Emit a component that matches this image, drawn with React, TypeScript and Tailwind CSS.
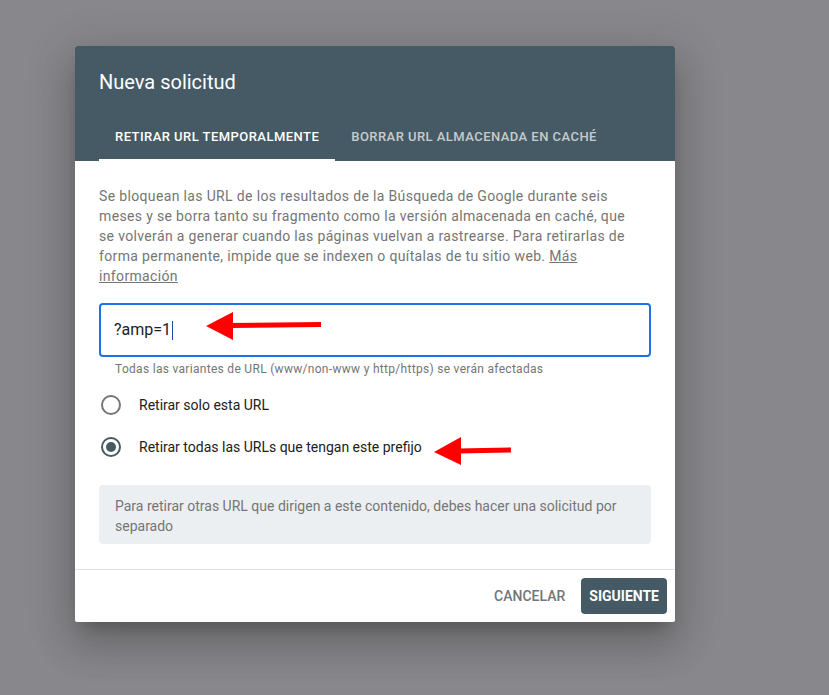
import React from 'react'

const font = { fontFamily: 'Roboto, "Liberation Sans", sans-serif' }

function Radio({ checked, label }: { checked?: boolean; label: string }) {
  return (
    <label className="flex h-[42px] items-center">
      <span
        className={
          'ml-[2px] flex h-[20px] w-[20px] items-center justify-center rounded-full border-2 ' +
          (checked ? 'border-[#455a64]' : 'border-[#757575]')
        }
      >
        {checked && <span className="h-[10px] w-[10px] rounded-full bg-[#455a64]" />}
      </span>
      <span className="ml-[18px] text-[14px] text-[#212121]">{label}</span>
    </label>
  )
}

export default function App() {
  return (
    <div className="relative min-h-screen bg-[#88888c] pl-[75px] pt-[46px]" style={font}>
      <div className="w-[600px] overflow-hidden rounded-[2px] bg-white shadow-[0_11px_15px_-7px_rgba(0,0,0,0.2),0_24px_38px_3px_rgba(0,0,0,0.14),0_9px_46px_8px_rgba(0,0,0,0.12)]">
        {/* Header */}
        <div className="bg-[#455a64] px-6">
          <h1 className="pt-6 text-[20px] leading-6 text-white">Nueva solicitud</h1>
          <div className="mt-[19px] flex h-12">
            <div className="relative flex items-center px-4 text-[13px] font-medium tracking-[0.035em] text-white">
              RETIRAR URL TEMPORALMENTE
              <span className="absolute bottom-0 left-0 right-0 h-[2px] bg-white" />
            </div>
            <div className="flex items-center px-4 text-[13px] font-medium tracking-[0.035em] text-white/70">
              BORRAR URL ALMACENADA EN CACHÉ
            </div>
          </div>
        </div>

        {/* Body */}
        <div className="px-6 pb-[25px] pt-[25px]">
          <p className="whitespace-nowrap text-[14px] leading-5 tracking-[0.35px] text-[#757575]">
            Se bloquean las URL de los resultados de la Búsqueda de Google durante seis
            <br />
            meses y se borra tanto su fragmento como la versión almacenada en caché, que
            <br />
            se volverán a generar cuando las páginas vuelvan a rastrearse. Para retirarlas de
            <br />
            forma permanente, impide que se indexen o quítalas de tu sitio web.{' '}
            <a className="underline">
              Más
              <br />
              información
            </a>
          </p>

          <div className="mt-[17px] flex h-[54px] items-center rounded-[4px] border-2 border-[#1a73e8] pl-[13px]">
            <span className="text-[16px] text-[#212121]">?amp=1</span>
            <span className="ml-px h-[19px] w-px bg-[#1a4fa0]" />
          </div>
          <p className="mt-1 pl-4 text-[12px] leading-4 tracking-[0.3px] text-[#757575]">
            Todas las variantes de URL (www/non-www y http/https) se verán afectadas
          </p>

          <div className="mt-[7px]">
            <Radio label="Retirar solo esta URL" />
            <Radio checked label="Retirar todas las URLs que tengan este prefijo" />
          </div>

          <div className="mt-[17px] rounded-[4px] bg-[#eceff1] px-4 pb-2 pt-[11px] text-[14px] leading-5 text-[#757575]">
            Para retirar otras URL que dirigen a este contenido, debes hacer una solicitud por separado
          </div>
        </div>

        {/* Footer */}
        <div className="flex justify-end gap-2 border-t border-[#e0e0e0] p-2">
          <button className="h-9 rounded-[4px] px-2 text-[14px] font-medium text-[#757575]">CANCELAR</button>
          <button className="h-9 rounded-[4px] bg-[#455a64] px-2 text-[14px] font-bold text-white">SIGUIENTE</button>
        </div>
      </div>

      {/* Red annotation arrows */}
      <svg className="pointer-events-none absolute left-0 top-0" width="829" height="695">
        <line x1="230" y1="325.5" x2="321" y2="324.5" stroke="#ff0000" strokeWidth="5" />
        <polygon points="206,326 233,312 233,340" fill="#ff0000" />
        <line x1="458" y1="451" x2="511" y2="450" stroke="#ff0000" strokeWidth="5" />
        <polygon points="434,452 461,437 461,465" fill="#ff0000" />
      </svg>
    </div>
  )
}
